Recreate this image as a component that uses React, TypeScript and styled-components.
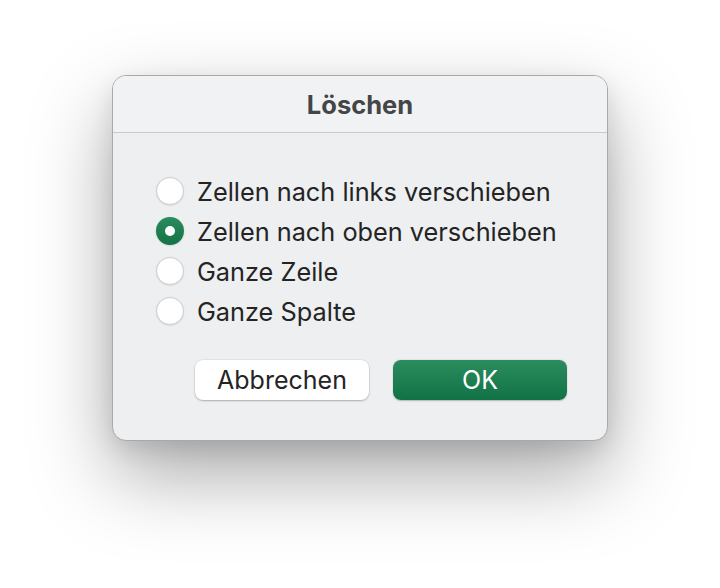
import React, { useState } from "react";
import styled, { createGlobalStyle } from "styled-components";

const Global = createGlobalStyle`
  html, body { margin: 0; padding: 0; background: #ffffff; }
  body { font-family: Inter, "Liberation Sans", sans-serif; -webkit-font-smoothing: antialiased; }
`;

const Page = styled.div`
  width: 720px;
  height: 588px;
  display: flex;
  justify-content: center;
  align-items: flex-start;
  padding-top: 75px;
  box-sizing: border-box;
  background: #ffffff;
`;

const Dialog = styled.div`
  width: 496px;
  box-sizing: border-box;
  background: #eeeff1;
  border: 1px solid #a9a9ab;
  border-radius: 14px;
  box-shadow: 0 34px 80px rgba(0, 0, 0, 0.34), 0 8px 22px rgba(0, 0, 0, 0.1);
  overflow: hidden;
  display: flex;
  flex-direction: column;
`;

const Header = styled.div`
  height: 56px;
  display: flex;
  align-items: center;
  justify-content: center;
  background: #f0f2f3;
  border-bottom: 1px solid #c9cacc;
`;

const Title = styled.h1`
  margin: 0;
  font-size: 25.5px;
  font-weight: 700;
  color: #444546;
  letter-spacing: 0;
`;

const Body = styled.div`
  padding: 38px 40px 40px 43px;
  display: flex;
  flex-direction: column;
`;

const Options = styled.div`
  display: flex;
  flex-direction: column;
`;

const Row = styled.label`
  height: 40px;
  display: flex;
  align-items: center;
  gap: 13px;
  cursor: default;
`;

const Radio = styled.span<{ $checked: boolean }>`
  width: 28px;
  height: 28px;
  box-sizing: border-box;
  border-radius: 50%;
  flex-shrink: 0;
  display: flex;
  align-items: center;
  justify-content: center;
  background: ${(p) =>
    p.$checked ? "linear-gradient(#2a8b5c, #137345)" : "#ffffff"};
  border: ${(p) => (p.$checked ? "none" : "1px solid #cfcfd1")};
  box-shadow: ${(p) =>
    p.$checked ? "0 0.5px 1.5px rgba(0,0,0,0.2)" : "0 0.5px 1.5px rgba(0,0,0,0.12)"};
`;

const Dot = styled.span`
  width: 10px;
  height: 10px;
  border-radius: 50%;
  background: #ffffff;
`;

const OptionText = styled.span`
  font-size: 25.3px;
  color: #242424;
  letter-spacing: 0;
`;

const Buttons = styled.div`
  display: flex;
  justify-content: flex-end;
  gap: 24px;
  margin-top: 29px;
`;

const Button = styled.button<{ $primary?: boolean }>`
  width: 174px;
  height: 40px;
  border-radius: 8px;
  border: none;
  font-family: Inter, "Liberation Sans", sans-serif;
  font-size: 25px;
  padding: 0;
  color: ${(p) => (p.$primary ? "#ffffff" : "#242424")};
  background: ${(p) =>
    p.$primary ? "linear-gradient(#2b8c5e, #117345)" : "#ffffff"};
  box-shadow: ${(p) =>
    p.$primary
      ? "0 0.5px 1.5px rgba(0,0,0,0.25)"
      : "0 0 0 0.5px rgba(0,0,0,0.08), 0 1px 2px rgba(0,0,0,0.25)"};
`;

const options = [
  "Zellen nach links verschieben",
  "Zellen nach oben verschieben",
  "Ganze Zeile",
  "Ganze Spalte",
];

export default function App() {
  const [selected, setSelected] = useState(1);
  return (
    <>
      <Global />
      <Page>
        <Dialog>
          <Header>
            <Title>Löschen</Title>
          </Header>
          <Body>
            <Options>
              {options.map((o, i) => (
                <Row key={o} onClick={() => setSelected(i)}>
                  <Radio $checked={selected === i}>
                    {selected === i && <Dot />}
                  </Radio>
                  <OptionText>{o}</OptionText>
                </Row>
              ))}
            </Options>
            <Buttons>
              <Button>Abbrechen</Button>
              <Button $primary>OK</Button>
            </Buttons>
          </Body>
        </Dialog>
      </Page>
    </>
  );
}
